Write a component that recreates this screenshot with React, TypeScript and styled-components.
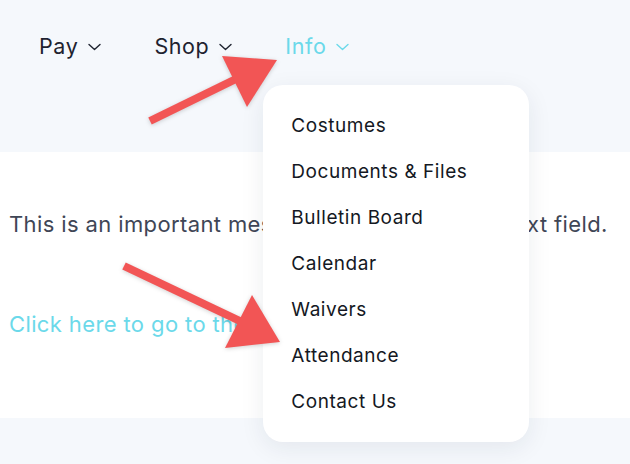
import styled, { createGlobalStyle } from 'styled-components';

const GlobalStyle = createGlobalStyle`
	html, body {
		margin: 0;
		padding: 0;
		background: #F5F8FC;
		font-family: Inter, "Noto Sans", sans-serif;
	}
`

const Page = styled.div`
	position: relative;
	width: 630px;
	height: 464px;
	overflow: hidden;
	display: flex;
	flex-direction: column;
`

const Header = styled.header`
	height: 152px;
	flex-shrink: 0;
	background: #F5F8FC;
	display: flex;
	align-items: flex-start;
	padding: 30px 0 0 39px;
	box-sizing: border-box;
	gap: 53px;
`

const NavItem = styled.div<{ $active?: boolean }>`
	position: relative;
	display: flex;
	align-items: center;
	gap: 10px;
	height: 32px;
	font-size: 21.5px;
	letter-spacing: 0.6px;
	font-weight: 400;
	color: ${p => p.$active ? '#6BD9EA' : '#1E2330'};
	cursor: pointer;

	svg {
		width: 13px;
		height: 8px;
		margin-top: 2px;
	}
`

const Dropdown = styled.ul`
	position: absolute;
	top: 55px;
	left: -22px;
	width: 266px;
	margin: 0;
	padding: 18px 0 17px 28px;
	box-sizing: border-box;
	list-style: none;
	background: #FFF;
	border-radius: 20px;
	box-shadow: 0 6px 24px rgba(30, 40, 60, 0.08);
	z-index: 2;
	letter-spacing: 0.55px;
`

const DropdownItem = styled.li`
	height: 46px;
	line-height: 46px;
	font-size: 19px;
	font-weight: 400;
	color: #141823;
	white-space: nowrap;
`

const Content = styled.main`
	height: 266px;
	flex-shrink: 0;
	background: #FFF;
	padding: 57px 0 0 9px;
	box-sizing: border-box;
`

const Message = styled.p`
	margin: 0;
	font-size: 22px;
	letter-spacing: 0.38px;
	line-height: 30px;
	color: #3F4656;
	white-space: nowrap;
`

const Link = styled.a`
	display: block;
	margin-top: 70px;
	font-size: 22px;
	letter-spacing: 0.38px;
	line-height: 30px;
	color: #6BD9EA;
	text-decoration: none;
	white-space: nowrap;
`

const Footer = styled.footer`
	flex: 1;
	background: #F5F8FC;
`

const Annotations = styled.svg`
	position: absolute;
	inset: 0;
	width: 630px;
	height: 464px;
	pointer-events: none;
	z-index: 3;
	filter: drop-shadow(0 1px 2px rgba(0, 0, 0, 0.18));
`

const Chevron = () => (
	<svg viewBox="0 0 13 8" fill="none" stroke="currentColor" strokeWidth="1.4" strokeLinecap="round" strokeLinejoin="round">
		<polyline points="1,1.5 6.5,6.5 12,1.5" />
	</svg>
)

const infoLinks = ['Costumes', 'Documents & Files', 'Bulletin Board', 'Calendar', 'Waivers', 'Attendance', 'Contact Us'];

const App = () => {
	return (
		<>
			<GlobalStyle />
			<Page>
				<Header>
					<NavItem>Pay <Chevron /></NavItem>
					<NavItem>Shop <Chevron /></NavItem>
					<NavItem $active>
						Info <Chevron />
						<Dropdown>
							{infoLinks.map((link, i) => (
								<DropdownItem key={i}>{link}</DropdownItem>
							))}
						</Dropdown>
					</NavItem>
				</Header>
				<Content>
					<Message>This is an important message displayed in the text field.</Message>
					<Link href="#">Click here to go to the important page.</Link>
				</Content>
				<Footer />
				{/* Red call-out arrows drawn on top of the screenshot */}
				<Annotations viewBox="0 0 630 464">
					<line x1="150" y1="121" x2="238" y2="78" stroke="#F25555" strokeWidth="8" />
					<polygon points="222,56 277,60 247,107" fill="#F25555" />
					<line x1="124" y1="266" x2="242" y2="322" stroke="#F25555" strokeWidth="8" />
					<polygon points="252,295 280,342 225,348" fill="#F25555" />
				</Annotations>
			</Page>
		</>
	)
}

export default App;
